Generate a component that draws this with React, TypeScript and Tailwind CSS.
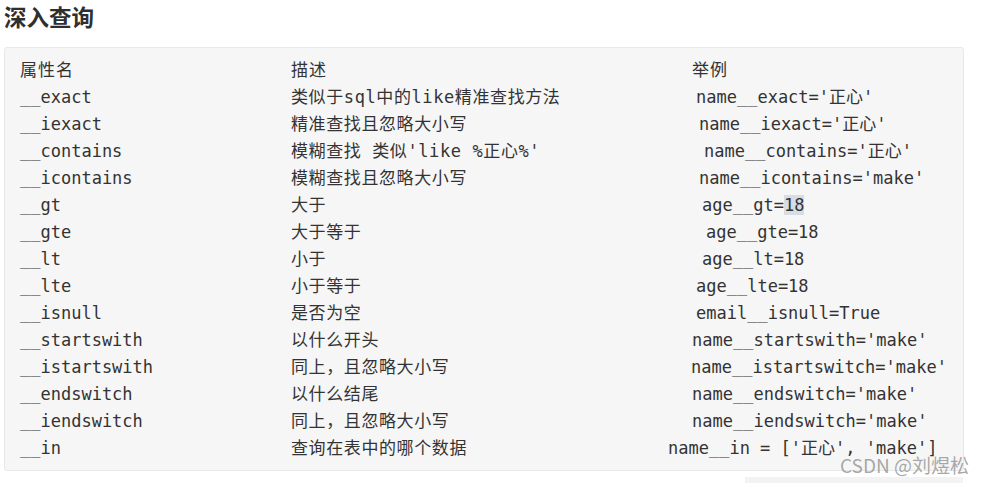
const rows: { name: string; desc: string; ex: string; pad: string }[] = [
  { name: "__exact", desc: "类似于sql中的like精准查找方法", ex: "name__exact='正心'", pad: "pl-[28px]" },
  { name: "__iexact", desc: "精准查找且忽略大小写", ex: "name__iexact='正心'", pad: "pl-[31px]" },
  { name: "__contains", desc: "模糊查找 类似'like %正心%'", ex: "name__contains='正心'", pad: "pl-[36px]" },
  { name: "__icontains", desc: "模糊查找且忽略大小写", ex: "name__icontains='make'", pad: "pl-[31px]" },
  { name: "__gt", desc: "大于", ex: "age__gt=18", pad: "pl-[34px]" },
  { name: "__gte", desc: "大于等于", ex: "age__gte=18", pad: "pl-[38px]" },
  { name: "__lt", desc: "小于", ex: "age__lt=18", pad: "pl-[34px]" },
  { name: "__lte", desc: "小于等于", ex: "age__lte=18", pad: "pl-[28px]" },
  { name: "__isnull", desc: "是否为空", ex: "email__isnull=True", pad: "pl-[28px]" },
  { name: "__startswith", desc: "以什么开头", ex: "name__startswith='make'", pad: "pl-[24px]" },
  { name: "__istartswith", desc: "同上，且忽略大小写", ex: "name__istartswitch='make'", pad: "pl-[23px]" },
  { name: "__endswitch", desc: "以什么结尾", ex: "name__endswitch='make'", pad: "pl-[24px]" },
  { name: "__iendswitch", desc: "同上，且忽略大小写", ex: "name__iendswitch='make'", pad: "pl-[24px]" },
  { name: "__in", desc: "查询在表中的哪个数据", ex: "name__in = ['正心', 'make']", pad: "pl-0" },
];

const mono = "font-['DejaVu_Sans_Mono','Noto_Sans_CJK_SC',monospace]";

export default function App() {
  return (
    <div className="w-[987px] h-[483px] bg-white relative overflow-hidden font-['Noto_Sans_CJK_SC',sans-serif] text-[#333]">
      {/* Title */}
      <h2 className="pl-[4px] h-[32px] leading-[32px] text-[22.5px] font-bold text-[#2f2f2f]">深入查询</h2>

      {/* Table block */}
      <div className="mt-[15px] ml-[4px] w-[960px] h-[424px] bg-[#f6f6f6] border border-[#e8e8e8] rounded-[3px] pt-[9px] pl-[15px]">
        <div className={`grid grid-cols-[271px_377px_1fr] text-[17px] leading-[27px] whitespace-pre ${mono}`}>
          <div className="leading-[23px] pb-[4px] font-['Noto_Sans_CJK_SC',sans-serif] tracking-[1px]">属性名</div>
          <div className="leading-[23px] pb-[4px] font-['Noto_Sans_CJK_SC',sans-serif] tracking-[1px]">描述</div>
          <div className="leading-[23px] pb-[4px] pl-[24px] font-['Noto_Sans_CJK_SC',sans-serif] tracking-[1px]">举例</div>
          {rows.map((r) => (
            <>
              <div key={r.name + "a"}>{r.name}</div>
              <div key={r.name + "b"} className="tracking-[0.6px]">{r.desc}</div>
              <div key={r.name + "c"} className={r.pad}>
                {r.name === "__gt" ? (
                  <>
                    age__gt=<span className="bg-[#d7dde4]">18</span>
                  </>
                ) : (
                  r.ex
                )}
              </div>
            </>
          ))}
        </div>
      </div>

      {/* Watermark */}
      <div className="absolute left-[840px] top-[452px] text-[19px] leading-[26px] text-[#8c8c8c]/75 font-['Noto_Sans_CJK_SC',sans-serif]">
        CSDN @刘煜松
      </div>
      <div className="absolute left-[745px] top-[477px] w-[218px] h-[6px] bg-[#f3f3f3]" />
    </div>
  );
}
